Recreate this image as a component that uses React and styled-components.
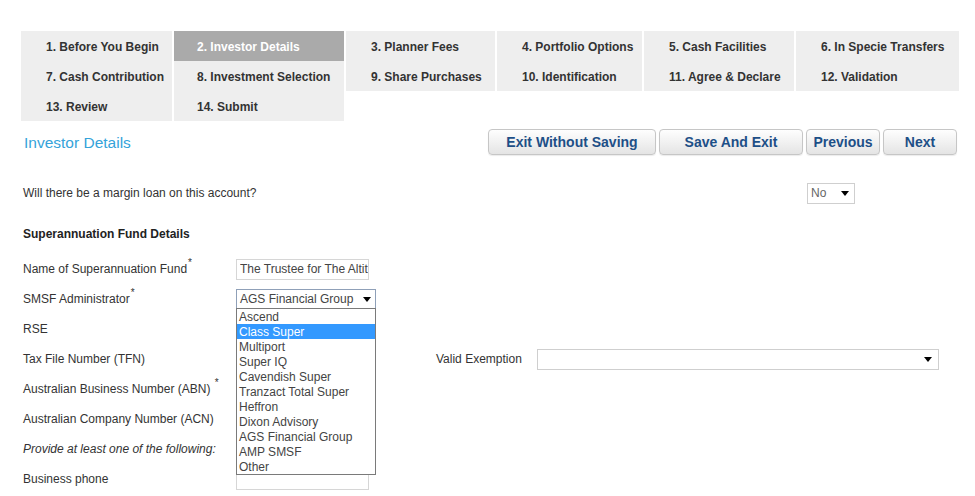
import React from "react";
import styled, { createGlobalStyle } from "styled-components";

const Global = createGlobalStyle`
  html, body { margin: 0; padding: 0; background: #ffffff; overflow: hidden; }
  body { font-family: Arial, "Liberation Sans", Helvetica, sans-serif; }
  * { box-sizing: border-box; }
`;

const Page = styled.div`
  width: 975px;
  height: 496px;
  padding: 31px 16px 0 21px;
  color: #333333;
  font-size: 12px;
`;

const TabGrid = styled.div`
  display: grid;
  grid-template-columns: 151px 170px 149px 145px 150px 163px;
  grid-auto-rows: 30px;
  column-gap: 2px;
  width: 938px;
`;

const Tab = styled.div`
  display: flex;
  align-items: center;
  padding: 1px 0 0 ${(p) => (p.$col === 1 ? "23px" : "25px")};
  background: ${(p) => (p.$active ? "#aaaaaa" : "#eeeeee")};
  color: ${(p) => (p.$active ? "#ffffff" : "#333333")};
  font-weight: bold;
  font-size: 12px;
  white-space: nowrap;
`;

const HeaderBar = styled.div`
  display: flex;
  align-items: center;
  justify-content: space-between;
  height: 26px;
  margin-top: 8px;
  width: 938px;
`;

const Title = styled.h1`
  margin: 1px 0 0 3px;
  font-size: 15.5px;
  font-weight: normal;
  color: #35a3da;
`;

const ButtonGroup = styled.div`
  display: flex;
  gap: 3px;
  margin-right: 2px;
`;

const ActionButton = styled.button`
  width: ${(p) => p.$w}px;
  height: 26px;
  border: 1px solid #c6c6c6;
  border-radius: 4px;
  background: linear-gradient(#fefefe, #e4e4e4);
  box-shadow: 0 1px 1px rgba(0, 0, 0, 0.08);
  color: #1d4f87;
  font-family: Arial, "Liberation Sans", sans-serif;
  font-weight: bold;
  font-size: 14px;
  padding: 0;
  cursor: pointer;
`;

const Form = styled.div`
  padding-left: 2px;
`;

const Row = styled.div`
  display: grid;
  grid-template-columns: ${(p) => p.$cols};
  align-items: center;
  height: 30px;
  margin-top: ${(p) => p.$mt || 0}px;
`;

const SectionHeading = styled.div`
  display: flex;
  align-items: center;
  height: 30px;
  margin-top: 11px;
  font-weight: bold;
  font-size: 12px;
  color: #222;
`;

const Fields = styled.div`
  margin-top: 5px;
`;

const Label = styled.div`
  font-size: 12px;
  color: #333;
  font-style: ${(p) => (p.$italic ? "italic" : "normal")};
  white-space: pre;
`;

const Req = styled.sup`
  font-size: 10px;
  vertical-align: top;
  position: relative;
  top: -5px;
  margin-left: 1px;
`;

const TextInput = styled.input`
  width: 133px;
  height: 21px;
  margin: 0;
  border: 1px solid #d6d6d6;
  padding: 0 0 0 3px;
  font-family: Arial, "Liberation Sans", sans-serif;
  font-size: 12px;
  color: #444;
  background: #fff;
  outline: none;
`;

const SelectBox = styled.div`
  position: relative;
  width: ${(p) => p.$w}px;
  height: ${(p) => p.$h || 20}px;
  border: 1px solid ${(p) => p.$border || "#cfcfcf"};
  padding: 0 ${(p) => p.$pr || 5}px 0 3px;
  display: flex;
  align-items: center;
  justify-content: space-between;
  background: #fff;
  font-size: 12px;
  color: ${(p) => p.$color || "#555"};
  white-space: nowrap;
`;

const ListBox = styled.ul`
  position: absolute;
  top: 100%;
  left: -1px;
  width: 140px;
  margin: 0;
  padding: 0;
  list-style: none;
  background: #fff;
  border: 1px solid #7a7a7a;
  z-index: 10;
`;

const ListItem = styled.li`
  height: 15px;
  line-height: 16px;
  padding-left: 2px;
  font-size: 12px;
  color: ${(p) => (p.$active ? "#ffffff" : "#444444")};
  background: ${(p) => (p.$active ? "#3399ff" : "transparent")};
  white-space: nowrap;
`;

const Arrow = () => (
  <svg width="8" height="5" viewBox="0 0 8 5" aria-hidden="true">
    <polygon points="0,0 8,0 4,5" fill="#000" />
  </svg>
);

const tabs = [
  "1. Before You Begin",
  "2. Investor Details",
  "3. Planner Fees",
  "4. Portfolio Options",
  "5. Cash Facilities",
  "6. In Specie Transfers",
  "7. Cash Contribution",
  "8. Investment Selection",
  "9. Share Purchases",
  "10. Identification",
  "11. Agree & Declare",
  "12. Validation",
  "13. Review",
  "14. Submit",
];

const admins = [
  "Ascend",
  "Class Super",
  "Multiport",
  "Super IQ",
  "Cavendish Super",
  "Tranzact Total Super",
  "Heffron",
  "Dixon Advisory",
  "AGS Financial Group",
  "AMP SMSF",
  "Other",
];

export default function App() {
  return (
    <>
      <Global />
      <Page>
        <TabGrid>
          {tabs.map((t, i) => (
            <Tab key={t} $active={i === 1} $col={i % 6}>
              {t}
            </Tab>
          ))}
        </TabGrid>

        <HeaderBar>
          <Title>Investor Details</Title>
          <ButtonGroup>
            <ActionButton $w={168}>Exit Without Saving</ActionButton>
            <ActionButton $w={144}>Save And Exit</ActionButton>
            <ActionButton $w={74}>Previous</ActionButton>
            <ActionButton $w={74}>Next</ActionButton>
          </ButtonGroup>
        </HeaderBar>

        <Form>
          <Row $cols="784px 48px" $mt={23}>
            <Label>Will there be a margin loan on this account?</Label>
            <SelectBox $w={48} $h={21} $color="#666">
              <span>No</span>
              <Arrow />
            </SelectBox>
          </Row>

          <SectionHeading>Superannuation Fund Details</SectionHeading>

          <Fields>
            <Row $cols="213px auto">
              <Label>
                Name of Superannuation Fund<Req>*</Req>
              </Label>
              <TextInput readOnly value="The Trustee for The Altitude Super Fund" />
            </Row>

            <Row $cols="213px auto">
              <Label>
                SMSF Administrator<Req>*</Req>
              </Label>
              <SelectBox $w={140} $border="#8fa0b8" $color="#444" $pr={4}>
                <span>AGS Financial Group</span>
                <Arrow />
                <ListBox>
                  {admins.map((a) => (
                    <ListItem key={a} $active={a === "Class Super"}>
                      {a}
                    </ListItem>
                  ))}
                </ListBox>
              </SelectBox>
            </Row>

            <Row $cols="213px auto">
              <Label>RSE</Label>
            </Row>

            <Row $cols="213px 200px 101px 402px">
              <Label>Tax File Number (TFN)</Label>
              <span />
              <Label>Valid Exemption</Label>
              <SelectBox $w={402} $h={21} $pr={6}>
                <span />
                <Arrow />
              </SelectBox>
            </Row>

            <Row $cols="213px auto">
              <Label>
                Australian Business Number (ABN) <Req>*</Req>
              </Label>
            </Row>

            <Row $cols="213px auto">
              <Label>Australian Company Number (ACN)</Label>
            </Row>

            <Row $cols="213px auto">
              <Label $italic>Provide at least one of the following:</Label>
            </Row>

            <Row $cols="213px auto">
              <Label>Business phone</Label>
              <TextInput readOnly value="" />
            </Row>
          </Fields>
        </Form>
      </Page>
    </>
  );
}
